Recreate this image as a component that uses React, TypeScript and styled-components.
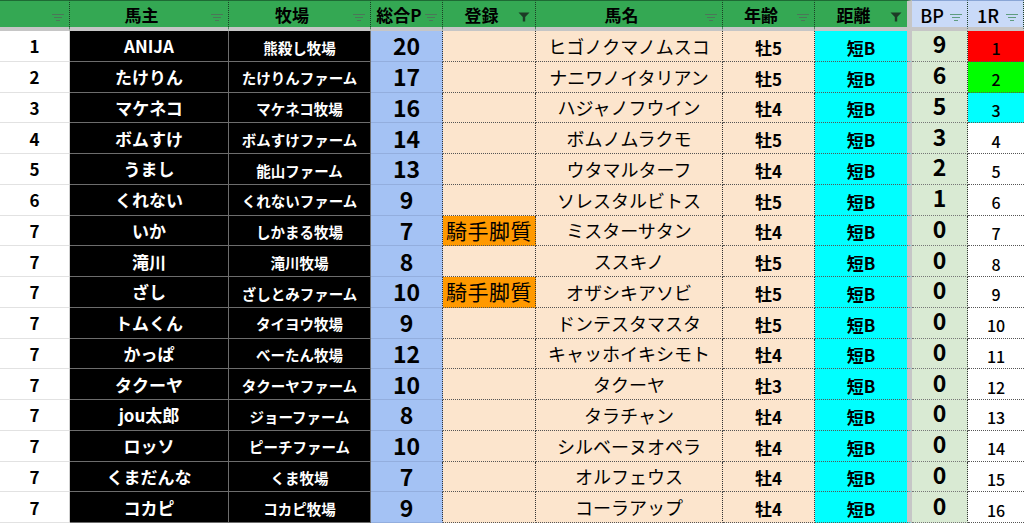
import React from 'react';
import styled, { createGlobalStyle } from 'styled-components';

type Row = {
  rank: number;
  owner: string;
  farm: string;
  point: number;
  entry?: string;
  horse: string;
  age: string;
  bp: number;
  race: number;
};

const rows: Row[] = [
  { rank: 1, owner: 'ANIJA', farm: '熊殺し牧場', point: 20, horse: 'ヒゴノクマノムスコ', age: '牡5', bp: 9, race: 1 },
  { rank: 2, owner: 'たけりん', farm: 'たけりんファーム', point: 17, horse: 'ナニワノイタリアン', age: '牡5', bp: 6, race: 2 },
  { rank: 3, owner: 'マケネコ', farm: 'マケネコ牧場', point: 16, horse: 'ハジャノフウイン', age: '牡4', bp: 5, race: 3 },
  { rank: 4, owner: 'ボムすけ', farm: 'ボムすけファーム', point: 14, horse: 'ボムノムラクモ', age: '牡5', bp: 3, race: 4 },
  { rank: 5, owner: 'うまし', farm: '能山ファーム', point: 13, horse: 'ウタマルターフ', age: '牡4', bp: 2, race: 5 },
  { rank: 6, owner: 'くれない', farm: 'くれないファーム', point: 9, horse: 'ソレスタルビトス', age: '牡5', bp: 1, race: 6 },
  { rank: 7, owner: 'いか', farm: 'しかまる牧場', point: 7, entry: '騎手脚質', horse: 'ミスターサタン', age: '牡4', bp: 0, race: 7 },
  { rank: 7, owner: '滝川', farm: '滝川牧場', point: 8, horse: 'ススキノ', age: '牡5', bp: 0, race: 8 },
  { rank: 7, owner: 'ざし', farm: 'ざしとみファーム', point: 10, entry: '騎手脚質', horse: 'オザシキアソビ', age: '牡5', bp: 0, race: 9 },
  { rank: 7, owner: 'トムくん', farm: 'タイヨウ牧場', point: 9, horse: 'ドンテスタマスタ', age: '牡5', bp: 0, race: 10 },
  { rank: 7, owner: 'かっぱ', farm: 'べーたん牧場', point: 12, horse: 'キャッホイキシモト', age: '牡4', bp: 0, race: 11 },
  { rank: 7, owner: 'タクーヤ', farm: 'タクーヤファーム', point: 10, horse: 'タクーヤ', age: '牡3', bp: 0, race: 12 },
  { rank: 7, owner: 'jou太郎', farm: 'ジョーファーム', point: 8, horse: 'タラチャン', age: '牡4', bp: 0, race: 13 },
  { rank: 7, owner: 'ロッソ', farm: 'ピーチファーム', point: 10, horse: 'シルベーヌオペラ', age: '牡4', bp: 0, race: 14 },
  { rank: 7, owner: 'くまだんな', farm: 'くま牧場', point: 7, horse: 'オルフェウス', age: '牡4', bp: 0, race: 15 },
  { rank: 7, owner: 'コカピ', farm: 'コカピ牧場', point: 9, horse: 'コーラアップ', age: '牡4', bp: 0, race: 16 },
];

const headers: { label: string; tone: 'green' | 'blue'; active?: boolean; sep?: boolean }[] = [
  { label: '', tone: 'green' },
  { label: '馬主', tone: 'green' },
  { label: '牧場', tone: 'green' },
  { label: '総合P', tone: 'green' },
  { label: '登録', tone: 'green', active: true },
  { label: '馬名', tone: 'green' },
  { label: '年齢', tone: 'green' },
  { label: '距離', tone: 'green', active: true, sep: true },
  { label: 'BP', tone: 'blue' },
  { label: '1R', tone: 'blue' },
];

const raceColors: Record<number, string> = { 1: '#ff0000', 2: '#00ff00', 3: '#00ffff' };

const FilterIcon: React.FC<{ active?: boolean; tone: 'green' | 'blue' }> = ({ active, tone }) =>
  active ? (
    <svg width="12" height="10" viewBox="0 0 12 10">
      <path d="M0.5 0.5 H11.5 L7.2 5 V9.5 H4.8 V5 Z" fill="#1d3b26" />
    </svg>
  ) : (
    <svg width="12" height="8" viewBox="0 0 12 8">
      <g stroke={tone === 'blue' ? '#5f9c7f' : '#4b7758'} strokeWidth="1">
        <line x1="0" y1="1.5" x2="12" y2="1.5" />
        <line x1="2" y1="4.5" x2="10" y2="4.5" />
        <line x1="4" y1="7.5" x2="8" y2="7.5" />
      </g>
    </svg>
  );

const App: React.FC = () => {
  return (
    <>
      <GlobalStyle />
      <Sheet>
        {headers.map((h, i) => (
          <HeaderCell key={i} $tone={h.tone} $sep={h.sep}>
            <span className="label">{h.label}</span>
            <span className="icon">
              <FilterIcon active={h.active} tone={h.tone} />
            </span>
          </HeaderCell>
        ))}

        {rows.map((r, i) => (
          <React.Fragment key={i}>
            <RankCell>{r.rank}</RankCell>
            <OwnerCell>{r.owner}</OwnerCell>
            <OwnerCell $small>{r.farm}</OwnerCell>
            <PointCell>{r.point}</PointCell>
            <EntryCell $flag={!!r.entry}>{r.entry}</EntryCell>
            <HorseCell>{r.horse}</HorseCell>
            <AgeCell>{r.age}</AgeCell>
            <DistCell>短B</DistCell>
            <BpCell>{r.bp}</BpCell>
            <RaceCell $bg={raceColors[r.race] ?? '#ffffff'}>{r.race}</RaceCell>
          </React.Fragment>
        ))}
      </Sheet>
    </>
  );
};

const GlobalStyle = createGlobalStyle`
  body {
    margin: 0;
    background: #ffffff;
    font-family: "Noto Sans CJK JP", "Noto Sans", sans-serif;
    overflow: hidden;
  }
`;

const Sheet = styled.div`
  display: grid;
  grid-template-columns: 70px 159px 142px 72px 93px 187px 92px 97px 56px 56px;
  grid-template-rows: 31px repeat(16, 30.75px);
  width: 1024px;
  height: 523px;
  overflow: hidden;
`;

const HeaderCell = styled.div<{ $tone: 'green' | 'blue'; $sep?: boolean }>`
  box-sizing: border-box;
  display: flex;
  align-items: center;
  background: ${(p) => (p.$tone === 'blue' ? '#c9daf8' : '#34a853')};
  border-top: 1px solid ${(p) => (p.$tone === 'blue' ? '#8aa6d6' : '#1e6a34')};
  border-bottom: 4px solid #c6c6c6;
  border-right: ${(p) => (p.$sep ? '5px solid #c6c6c6' : '1px dotted #1c3f26')};
  padding: 0 5px 0 2px;

  .label {
    flex: 1;
    text-align: center;
    color: #000;
    font-size: ${(p) => (p.$tone === 'blue' ? '18px' : '17px')};
    font-weight: ${(p) => (p.$tone === 'blue' ? 500 : 700)};
    line-height: 1;
    white-space: nowrap;
    margin-top: 1px;
  }

  .icon {
    display: flex;
    align-items: center;
    width: 12px;
    margin-top: 6px;
  }
`;

const BaseCell = styled.div`
  box-sizing: border-box;
  display: flex;
  align-items: center;
  justify-content: center;
  line-height: 1;
  white-space: nowrap;
  color: #000;
`;

const RankCell = styled(BaseCell)`
  background: #ffffff;
  border-right: 1px solid #cfcfcf;
  border-bottom: 1px solid #e2e2e2;
  font-size: 17px;
  font-weight: 700;
`;

const OwnerCell = styled(BaseCell)<{ $small?: boolean }>`
  background: #000000;
  color: #ffffff;
  border-right: 1px solid #6d6d6d;
  border-bottom: 1px solid #6d6d6d;
  font-size: ${(p) => (p.$small ? '14.5px' : '17px')};
  font-weight: 700;
  padding-top: ${(p) => (p.$small ? '4px' : '0')};
`;

const PointCell = styled(BaseCell)`
  background: #a4c2f4;
  border-right: 1px dotted #333;
  border-bottom: 1px solid #93aede;
  font-size: 23px;
  font-weight: 700;
`;

const EntryCell = styled(BaseCell)<{ $flag?: boolean }>`
  background: ${(p) => (p.$flag ? '#ff9900' : '#fce5cd')};
  border-right: 1px dotted #333;
  border-bottom: 1px dotted #555;
  font-size: 21px;
  letter-spacing: 0.5px;
`;

const HorseCell = styled(BaseCell)`
  background: #fce5cd;
  border-right: 1px dotted #333;
  border-bottom: 1px dotted #555;
  font-size: 18px;
  font-weight: 400;
`;

const AgeCell = styled(BaseCell)`
  background: #fce5cd;
  border-right: 1px dotted #333;
  border-bottom: 1px dotted #555;
  font-size: 17px;
  font-weight: 700;
  padding-top: 3px;
`;

const DistCell = styled(BaseCell)`
  background: #00ffff;
  border-right: 5px solid #c6c6c6;
  border-bottom: 1px dotted #555;
  font-size: 17px;
  font-weight: 700;
  padding-top: 3px;
`;

const BpCell = styled(BaseCell)`
  background: #d9ead3;
  border-right: 1px dotted #333;
  border-bottom: 1px dotted #777;
  font-size: 23px;
  font-weight: 700;
  padding-bottom: 4px;
`;

const RaceCell = styled(BaseCell)<{ $bg: string }>`
  background: ${(p) => p.$bg};
  border-bottom: 1px dotted #555;
  font-size: 16px;
  font-weight: 500;
  padding-top: 5px;
`;

export default App;
